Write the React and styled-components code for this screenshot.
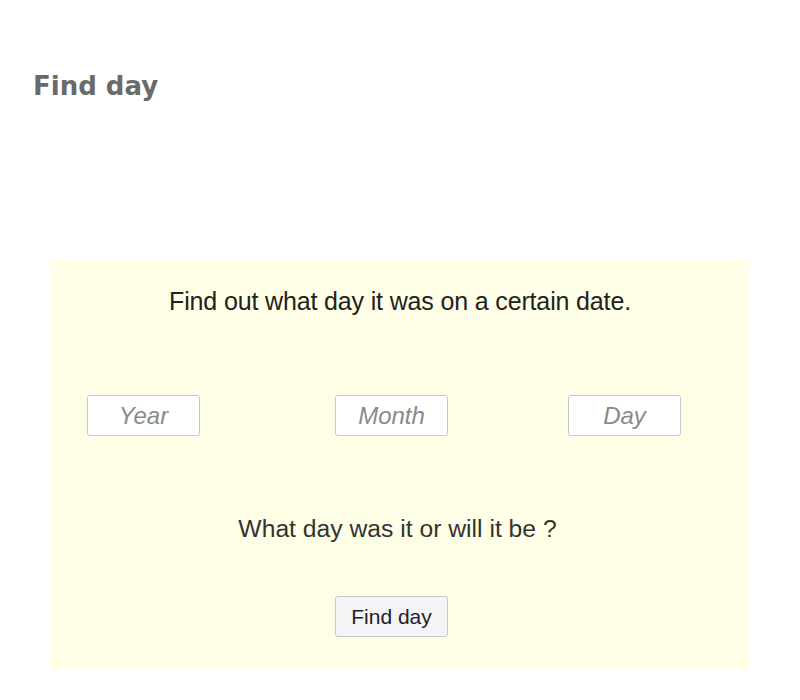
import styled, { createGlobalStyle } from "styled-components"

const GlobalStyle = createGlobalStyle`
    body {
        margin: 0;
        background-color: #ffffff;
        font-family: "Liberation Sans", Arial, sans-serif;
    }
`

export default function App () {
    return(
        <>
            <GlobalStyle/>
            <Page>
                <Title>Find day</Title>
                <Panel>
                    <Heading>Find out what day it was on a certain date.</Heading>
                    <FieldsRow>
                        <DateInput placeholder="Year" offset={37}/>
                        <DateInput placeholder="Month" offset={135}/>
                        <DateInput placeholder="Day" offset={120}/>
                    </FieldsRow>
                    <Question>What day was it or will it be ?</Question>
                    <FindButton>Find day</FindButton>
                </Panel>
            </Page>
        </>
    )
}

const Page = styled.div`
    width: 800px;
    height: 700px;
    padding: 66px 50px 0 50px;
    box-sizing: border-box;
`
const Title = styled.h1`
    margin: 0 0 0 -17px;
    font-family: "Comic Sans MS", "DejaVu Sans", sans-serif;
    font-size: 26px;
    font-weight: bold;
    color: #6a6a6a;
    line-height: 40px;
`
const Panel = styled.div`
    margin-top: 154px;
    width: 700px;
    height: 410px;
    background-color: #fffee6;
    border-radius: 3px;
    display: flex;
    flex-direction: column;
    align-items: center;
    padding-top: 26px;
    box-sizing: border-box;
`
const Heading = styled.h2`
    margin: 0;
    font-size: 25px;
    font-weight: normal;
    letter-spacing: -0.15px;
    color: #222222;
    line-height: 30px;
`
const FieldsRow = styled.div`
    align-self: stretch;
    display: flex;
    margin-top: 79px;
`
const DateInput = styled.input`
    width: 113px;
    height: 41px;
    box-sizing: border-box;
    margin-left: ${props => props.offset}px;
    border: 1px solid #c8c8c8;
    border-radius: 3px;
    background-color: #ffffff;
    font-family: "Liberation Sans", Arial, sans-serif;
    font-size: 24px;
    text-align: center;
    outline: none;

    &::placeholder {
        color: #8a8a8a;
        font-style: italic;
    }
`
const Question = styled.p`
    margin: 78px 0 0 -5px;
    font-size: 24.7px;
    color: #333333;
    line-height: 30px;
`
const FindButton = styled.button`
    margin: 52px 0 0 -17px;
    width: 113px;
    height: 41px;
    border: 1px solid #c8c8c8;
    border-radius: 3px;
    background-color: #f4f4f6;
    font-family: "Liberation Sans", Arial, sans-serif;
    font-size: 21px;
    color: #222222;
    cursor: pointer;
`
